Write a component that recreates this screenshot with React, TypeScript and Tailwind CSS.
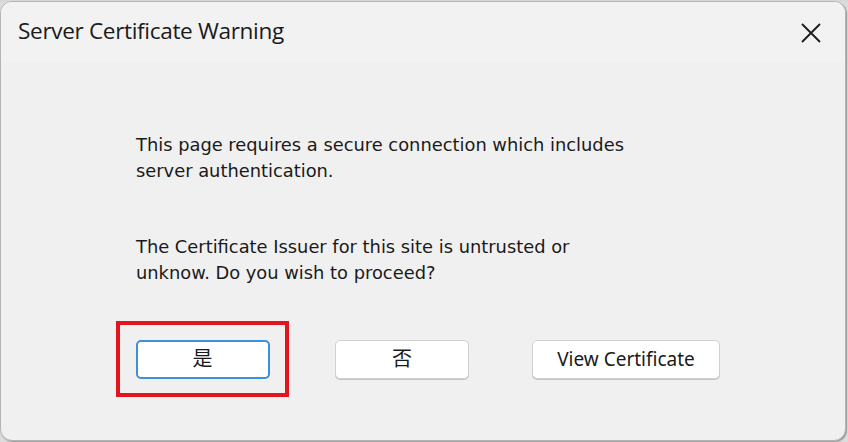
const bodyFont = { fontFamily: 'Tahoma, "DejaVu Sans", sans-serif' }

function DialogButton({ label, primary, wide }: { label: string; primary?: boolean; wide?: boolean }) {
  return (
    <button
      type="button"
      className={
        primary
          ? 'h-[39px] w-[134px] rounded-[5px] border-2 border-[#3c8fd9] bg-white text-[20px] text-[#1a1a1a]'
          : wide
            ? 'h-[39px] w-[188px] rounded-[5px] border border-[#d0d0d0] bg-white text-[19px] text-[#1a1a1a] shadow-[0_1px_0_#c4c4c4]'
            : 'h-[39px] w-[134px] rounded-[5px] border border-[#d0d0d0] bg-white text-[20px] text-[#1a1a1a] shadow-[0_1px_0_#c4c4c4]'
      }
      style={{ fontFamily: '"Noto Sans", "Noto Sans CJK SC", sans-serif' }}
    >
      {label}
    </button>
  )
}

export default function App() {
  return (
    <div className="relative h-[442px] w-[848px] overflow-hidden bg-[#dcdcdc]">
      <div className="flex h-[2px] bg-[#d8d8d8]">
        <span className="ml-[617px] w-[1px] bg-[#3a6fa8]" />
        <span className="ml-[267px] w-[18px] bg-[#2a6aa8]" />
        <span className="ml-[15px] w-[1px] bg-[#3a6fa8]" />
        <span className="ml-[29px] w-[94px] bg-[#2a6aa8]" />
      </div>
      <div className="mt-[-1px] flex h-[440px] w-[846px] flex-col overflow-hidden rounded-[12px] border border-[#b4b4b4] bg-[#f0f0f0] shadow-[1px_1px_1px_#9a9a9a]">
        <div className="flex h-[60px] shrink-0 items-start justify-between bg-[#f2f2f2] pl-[17px] pr-[23px] pt-[13px]">
          <h1
            className="text-[22.6px] leading-[32px] tracking-[-0.35px] text-[#1b1b1b]"
            style={{ fontFamily: '"Open Sans", "Noto Sans", sans-serif' }}
          >
            Server Certificate Warning
          </h1>
          <svg width="22" height="22" viewBox="0 0 22 22" className="mt-[7px] text-[#1b1b1b]" aria-hidden>
            <path d="M2 2L20 20M20 2L2 20" stroke="currentColor" strokeWidth="1.8" />
          </svg>
        </div>
        <div
          className="flex flex-1 flex-col pl-[135px] pt-[70px] text-[17.85px] leading-[26px] text-[#1a1a1a]"
          style={bodyFont}
        >
          <p>
            This page requires a secure connection which includes
            <br />
            server authentication.
          </p>
          <p className="mt-[50px]">
            The Certificate Issuer for this site is untrusted or
            <br />
            unknow. Do you wish to proceed?
          </p>
          <div className="ml-[-20px] mt-[35px] flex items-center">
            <div className="flex h-[76px] w-[173px] items-center justify-center border-4 border-[#e4141e]">
              <DialogButton label="是" primary />
            </div>
            <div className="ml-[46px]">
              <DialogButton label="否" />
            </div>
            <div className="ml-[63px]">
              <DialogButton label="View Certificate" wide />
            </div>
          </div>
        </div>
      </div>
    </div>
  )
}
